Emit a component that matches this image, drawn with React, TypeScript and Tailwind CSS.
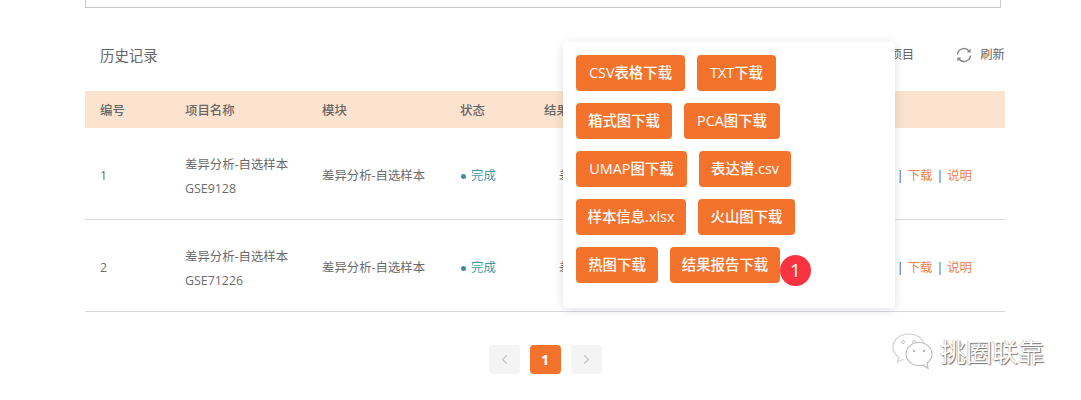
import React from 'react';
import { ChevronLeft, ChevronRight } from 'lucide-react';

const FONT = '[font-family:"Open_Sans","Noto_Sans_CJK_SC",sans-serif]';

const downloads = [
  [
    { label: 'CSV表格下载', width: 'w-[109px]' },
    { label: 'TXT下载', width: 'w-[79px]' },
  ],
  [
    { label: '箱式图下载', width: 'w-[96px]' },
    { label: 'PCA图下载', width: 'w-[96px]' },
  ],
  [
    { label: 'UMAP图下载', width: 'w-[111px]' },
    { label: '表达谱.csv', width: 'w-[92px]' },
  ],
  [
    { label: '样本信息.xlsx', width: 'w-[110px]' },
    { label: '火山图下载', width: 'w-[97px]' },
  ],
  [
    { label: '热图下载', width: 'w-[82px]' },
    { label: '结果报告下载', width: 'w-[110px]' },
  ],
];

const records = [
  { id: 1, gse: 'GSE9128' },
  { id: 2, gse: 'GSE71226' },
];

function RefreshIcon() {
  return (
    <svg width="16" height="16" viewBox="0 0 16 16" fill="none" className="text-[#888]">
      <path d="M1.5 7.5A6.5 6.5 0 0 1 13 4" stroke="currentColor" strokeWidth="1.5" />
      <path d="M14.5 8.5A6.5 6.5 0 0 1 3 12" stroke="currentColor" strokeWidth="1.5" />
      <path d="M14.6 1.6v4h-4z" fill="currentColor" />
      <path d="M1.4 14.4v-4h4z" fill="currentColor" />
    </svg>
  );
}

function WechatLogo() {
  return (
    <svg width="44" height="40" viewBox="0 0 44 40" fill="none">
      <path
        d="M19 2C10 2 3 7.600 3 15c0 4.500 2.500 8 6 10.500L7.500 30l6-2.700"
        fill="#fff"
        stroke="#d0d0d0"
        strokeWidth="1.2"
      />
      <path d="M19 2c8 0 14 4.500 15.500 11" stroke="#d0d0d0" strokeWidth="1.200" />
      <circle cx="13" cy="10" r="1.500" stroke="#c4c4c4" />
      <circle cx="24" cy="10" r="1.500" stroke="#c4c4c4" />
      <ellipse cx="29" cy="22" rx="13" ry="11.500" fill="#fff" stroke="#bdbdbd" strokeWidth="1.200" />
      <path d="M33 33l5 3.500-1-6" fill="#fff" stroke="#bdbdbd" strokeWidth="1.200" />
      <circle cx="24" cy="19" r="1.300" fill="#bbb" />
      <circle cx="34" cy="19" r="1.300" fill="#bbb" />
    </svg>
  );
}

function RecordRow({ id, gse }: { id: number; gse: string }) {
  return (
    <div className="grid h-[92px] grid-cols-[85px_137px_138px_84px_1fr_auto] items-center border-b border-[#d5d9e0] pt-[6px] text-[12.4px] text-[#6b6b6b]">
      <div className="pl-[15px]">{id}</div>
      <div className="pl-[15px] leading-[24px]">
        <div>差异分析-自选样本</div>
        <div>{gse}</div>
      </div>
      <div className="pl-[15px]">差异分析-自选样本</div>
      <div className="flex items-center gap-[5px] pl-[16px] text-[#3f9aa3]">
        <span className="h-[5px] w-[5px] rounded-full bg-[#3f8f97]" />
        完成
      </div>
      {/* mostly hidden by the popover, only a sliver shows */}
      <div className="pl-[30px]">差</div>
      <div className="flex items-center gap-[4px] pr-[33px] text-[#ee8243]">
        <span className="text-[#555]">|</span>
        <span>下载</span>
        <span className="text-[#555]">|</span>
        <span>说明</span>
      </div>
    </div>
  );
}

export default function App() {
  return (
    <div className={`relative h-[400px] w-[1081px] overflow-hidden bg-white px-[85px] ${FONT}`}>
      {/* bottom edge of the form box above */}
      <div className="h-2 w-[916px] border border-t-0 border-[#c8c8c8]" />

      <div className="flex h-[83px] w-[920px] items-center justify-between pb-[5px] pt-[17px]">
        <span className="pl-[15px] text-[14.4px] text-[#666]">历史记录</span>
        <div className="flex items-center text-[12.4px] text-[#666]">
          <span className="mr-[42px]">新建项目</span>
          <RefreshIcon />
          <span className="ml-[8px]">刷新</span>
        </div>
      </div>

      <div className="w-[920px]">
        <div className="grid h-[37px] grid-cols-[85px_137px_138px_84px_1fr] items-center bg-[#fce3cf] pt-[3px] text-[12.4px] font-medium text-[#666]">
          <div className="pl-[15px]">编号</div>
          <div className="pl-[15px]">项目名称</div>
          <div className="pl-[15px]">模块</div>
          <div className="pl-[15px]">状态</div>
          <div className="pl-[15px]">结果</div>
        </div>
        {records.map((r) => (
          <RecordRow key={r.id} id={r.id} gse={r.gse} />
        ))}
      </div>

      <div className="mt-[33px] flex w-[920px] justify-center gap-[10px]">
        <button type="button" className="flex h-[29px] w-[31px] items-center justify-center rounded-sm bg-[#f4f4f5] text-[#c0c4cc]">
          <ChevronLeft size={15} />
        </button>
        <button type="button" className="flex h-[29px] w-[31px] items-center justify-center rounded-sm bg-[#f3722c] text-[14.4px] font-bold text-white">
          1
        </button>
        <button type="button" className="flex h-[29px] w-[31px] items-center justify-center rounded-sm bg-[#f4f4f5] text-[#c0c4cc]">
          <ChevronRight size={15} />
        </button>
      </div>

      {/* download popover */}
      <div className="absolute left-[563px] top-[42px] flex h-[266px] w-[332px] flex-col gap-3 rounded-[4px] bg-white p-[13px] shadow-[0_2px_12px_rgba(0,0,0,0.12)]">
        {downloads.map((row, i) => (
          <div key={i} className="flex gap-3">
            {row.map((b) => (
              <button
                key={b.label}
                type="button"
                className={`flex h-9 items-center justify-center rounded-[4px] bg-[#f3722c] text-[14.4px] font-medium whitespace-nowrap text-[#fff] ${b.width}`}
              >
                {b.label}
              </button>
            ))}
          </div>
        ))}
      </div>

      {/* numbered callout */}
      <div className="absolute left-[780px] top-[255px] flex h-[31px] w-[31px] items-center justify-center rounded-full bg-[#f9333f] text-[19px] text-white">
        1
      </div>

      {/* watermark */}
      <div className="absolute left-[890px] top-[332px] flex items-center gap-[6px]">
        <WechatLogo />
        <span className="text-[26px] leading-none text-white [text-shadow:1px_1px_1px_#707070,-0.5px_-0.5px_0.5px_#aaa]">
          挑圈联靠
        </span>
      </div>
    </div>
  );
}
